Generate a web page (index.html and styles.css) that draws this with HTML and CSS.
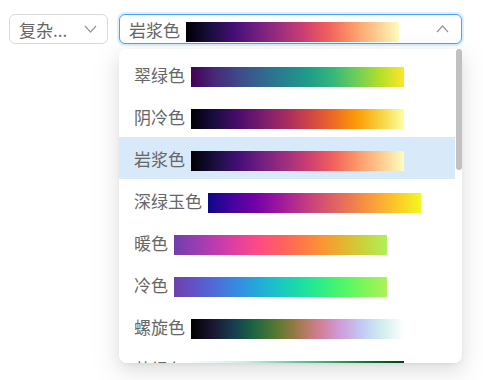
FILE: index.html
```html
<!DOCTYPE html>
<html>
<head>
  <title>色带选择</title>
  <link rel="stylesheet" href="styles.css">
</head>
<body>
  <div class="page">
    <div class="select select-small">
      <span class="select-text">复杂...</span>
      <svg class="arrow" width="13" height="8" viewBox="0 0 13 8"><polyline points="1,1 6.5,7 12,1" fill="none" stroke="#999" stroke-width="1.2"/></svg>
    </div>

    <div class="picker">
      <div class="select select-open">
        <span class="label">岩浆色</span>
        <span class="ramp magma"></span>
        <svg class="arrow arrow-up" width="13" height="8" viewBox="0 0 13 8"><polyline points="1,7 6.5,1 12,7" fill="none" stroke="#999" stroke-width="1.2"/></svg>
      </div>

      <div class="dropdown">
        <div class="option"><span class="label">翠绿色</span><span class="ramp viridis"></span></div>
        <div class="option"><span class="label">阴冷色</span><span class="ramp inferno"></span></div>
        <div class="option selected"><span class="label">岩浆色</span><span class="ramp magma"></span></div>
        <div class="option"><span class="label">深绿玉色</span><span class="ramp plasma"></span></div>
        <div class="option"><span class="label">暖色</span><span class="ramp warm"></span></div>
        <div class="option"><span class="label">冷色</span><span class="ramp cool"></span></div>
        <div class="option"><span class="label">螺旋色</span><span class="ramp cubehelix"></span></div>
        <div class="option"><span class="label">苍绿色</span><span class="ramp bugn"></span></div>
        <div class="option"><span class="label">彩虹色</span><span class="ramp rainbow"></span></div>
        <div class="option"><span class="label">光谱色</span><span class="ramp spectral"></span></div>
        <div class="option"><span class="label">红黄色</span><span class="ramp ylorrd"></span></div>
        <div class="option"><span class="label">红蓝色</span><span class="ramp rdbu"></span></div>
        <div class="option"><span class="label">紫绿色</span><span class="ramp prgn"></span></div>
        <div class="option"><span class="label">棕绿色</span><span class="ramp brbg"></span></div>
        <div class="option"><span class="label">橙紫色</span><span class="ramp puor"></span></div>
        <div class="option"><span class="label">蓝紫色</span><span class="ramp bupu"></span></div>
        <div class="option"><span class="label">绿蓝色</span><span class="ramp gnbu"></span></div>
        <div class="option"><span class="label">橙红色</span><span class="ramp orrd"></span></div>
        <div class="option"><span class="label">灰色</span><span class="ramp greys"></span></div>
      </div>
      <div class="scroll-thumb"></div>
    </div>
  </div>
</body>
</html>
```

FILE: styles.css
```css
html,
body {
  height: 100%;
}

body {
  margin: 0;
  padding: 0;
  background: #fff;
  font-family: "Noto Sans CJK SC", "Noto Sans", sans-serif;
  color: #666;
}

.page {
  display: flex;
  align-items: flex-start;
  gap: 11px;
  height: 100%;
  box-sizing: border-box;
  padding: 14px 9px;
}

.select {
  display: flex;
  align-items: center;
  height: 30px;
  box-sizing: border-box;
  border: 1px solid #d9d9d9;
  border-radius: 6px;
  background: #fff;
  font-size: 17px;
  line-height: 1;
}

.select-small {
  width: 99px;
  padding: 0 10px 0 9px;
}

.select-text {
  flex: 1;
}

.picker {
  position: relative;
  width: 343px;
}

.select-open {
  padding: 0 12px 0 9px;
  border-color: #4aa3f5;
  box-shadow: 0 0 0 2px rgba(5, 145, 255, 0.15);
}

.arrow-up {
  margin-left: auto;
}

.label {
  white-space: nowrap;
  font-size: 17px;
}

.ramp {
  display: block;
  flex: none;
  width: 213px;
  height: 20px;
  margin-left: 6px;
  margin-top: 5px;
}

.dropdown {
  position: absolute;
  top: 35px;
  left: 0;
  right: 0;
  height: 314px;
  box-sizing: border-box;
  padding: 4px 7px 4px 0;
  background: #fff;
  border-radius: 8px;
  overflow-y: auto;
  scrollbar-width: none;
  box-shadow: 0 6px 16px 0 rgba(0, 0, 0, 0.08), 0 3px 6px -4px rgba(0, 0, 0, 0.12), 0 9px 28px 8px rgba(0, 0, 0, 0.05);
}

/* barra de scroll dibujada encima */
.scroll-thumb {
  position: absolute;
  top: 35px;
  right: 0;
  width: 6px;
  height: 121px;
  background: #c1c1c1;
  border-radius: 3px;
}

.option {
  display: flex;
  align-items: center;
  height: 42px;
  padding: 0 15px;
}

.option.selected {
  background: #d8e9f9;
}

.viridis { background: linear-gradient(to right, #440154, #482878, #3e4989, #31688e, #26828e, #1f9e89, #35b779, #6ece58, #b5de2b, #fde725); }
.inferno { background: linear-gradient(to right, #000004, #1b0c41, #4a0c6b, #781c6d, #a52c60, #cf4446, #ed6925, #fb9b06, #f7d13d, #fcffa4); }
.magma { background: linear-gradient(to right, #000004, #180f3d, #440f76, #721f81, #9e2f7f, #cd4071, #f1605d, #fd9668, #feca8d, #fcfdbf); }
.plasma { background: linear-gradient(to right, #0d0887, #46039f, #7201a8, #9c179e, #bd3786, #d8576b, #ed7953, #fb9f3a, #fdca26, #f0f921); }
.warm { background: linear-gradient(to right, #6e40aa, #963db3, #bf3caf, #e4419d, #fe4b83, #ff5e63, #ff7847, #fb9633, #e2b72f, #c6d63c, #aff05b); }
.cool { background: linear-gradient(to right, #6e40aa, #6054c8, #4c6edb, #368ce1, #23abd8, #1ac7c2, #1ddfa3, #30ef82, #52f667, #7ff658, #aff05b); }
.cubehelix { background: linear-gradient(to right, #000000, #1a1530, #163d4e, #1f6642, #54792f, #a07949, #d07e93, #cf9cda, #c1caf3, #d2eeef, #ffffff); }
.bugn { background: linear-gradient(to right, #f7fcfd, #e5f5f9, #ccece6, #99d8c9, #66c2a4, #41ae76, #238b45, #006d2c, #00441b); }
.rainbow { background: linear-gradient(to right, #6e40aa, #ee4395, #ff8c38, #afef5a, #28ea8d, #2f96e0, #6e40aa); }
.spectral { background: linear-gradient(to right, #9e0142, #f46d43, #fee08b, #e6f598, #66c2a5, #5e4fa2); }
.ylorrd { background: linear-gradient(to right, #ffffcc, #feb24c, #fc4e2a, #bd0026, #800026); }
.rdbu { background: linear-gradient(to right, #67001f, #d6604d, #f7f7f7, #4393c3, #053061); }
.prgn { background: linear-gradient(to right, #40004b, #9970ab, #f7f7f7, #5aae61, #00441b); }
.brbg { background: linear-gradient(to right, #543005, #bf812d, #f5f5f5, #35978f, #003c30); }
.puor { background: linear-gradient(to right, #2d004b, #8073ac, #f7f7f7, #e08214, #7f3b08); }
.bupu { background: linear-gradient(to right, #f7fcfd, #9ebcda, #8c6bb1, #4d004b); }
.gnbu { background: linear-gradient(to right, #f7fcf0, #a8ddb5, #4eb3d3, #084081); }
.orrd { background: linear-gradient(to right, #fff7ec, #fdbb84, #ef6548, #7f0000); }
.greys { background: linear-gradient(to right, #ffffff, #969696, #000000); }
```
